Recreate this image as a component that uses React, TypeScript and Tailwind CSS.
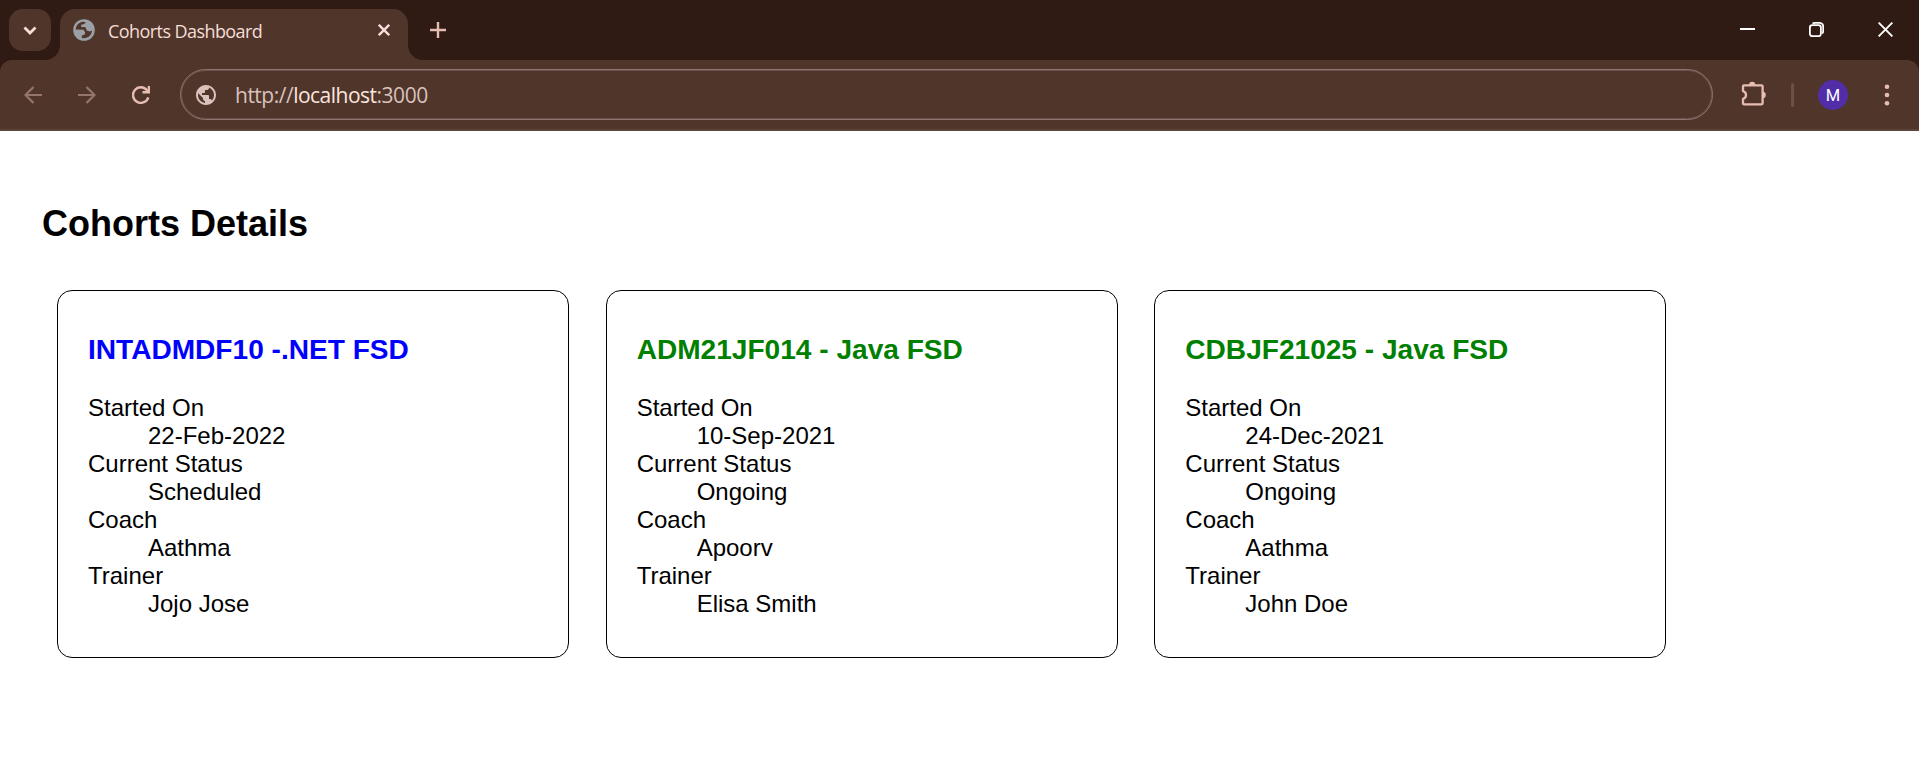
import React from "react";
import { MdPublic } from "react-icons/md";

type Cohort = {
  title: string;
  startedOn: string;
  status: string;
  coach: string;
  trainer: string;
};

const cohorts: Cohort[] = [
  { title: "INTADMDF10 -.NET FSD", startedOn: "22-Feb-2022", status: "Scheduled", coach: "Aathma", trainer: "Jojo Jose" },
  { title: "ADM21JF014 - Java FSD", startedOn: "10-Sep-2021", status: "Ongoing", coach: "Apoorv", trainer: "Elisa Smith" },
  { title: "CDBJF21025 - Java FSD", startedOn: "24-Dec-2021", status: "Ongoing", coach: "Aathma", trainer: "John Doe" },
];

function TabStrip() {
  return (
    <div className="flex h-[60px] items-start bg-[#301b14]">
      <button className="mt-[9px] ml-[9px] flex h-[42px] w-[42px] items-center justify-center rounded-[14px] bg-[#50352b]">
        <svg width="14" height="9" viewBox="0 0 14 9" fill="none" stroke="#f5ded7" strokeWidth="2.8">
          <path d="M1.5 1.5 7 7l5.500-5.500" />
        </svg>
      </button>
      <svg className="mt-[45px] -ml-[6px]" width="15" height="15" viewBox="0 0 15 15" fill="#50352b">
        <path d="M15 0v15H0C8.300 15 15 8.300 15 0z" />
      </svg>
      <div className="mt-[9px] flex h-[51px] w-[348px] items-start rounded-t-[15px] bg-[#50352b]">
        <svg className="mt-[10px] ml-[13px] shrink-0" width="22" height="22" viewBox="0 0 22 22">
          <circle cx="11" cy="11" r="10.800" fill="#9aa0a6" />
          <path
            d="M2.700 10.400C3 6.400 6 3.200 10.200 2.800L12.600 3.200 11.400 5 8.200 5.700 8.200 8 12.600 8.200 13.600 11.600 17 12.600 19.100 11.600C18.700 16 15.300 19.200 11 19.300L8.800 18.900 8.800 16.600 11.800 15.600 12.200 13.500 10.600 10.800z"
            fill="#50352b"
          />
        </svg>
        <span className="mt-[9px] ml-[13px] w-[250px] font-['Open_Sans',sans-serif] text-[18px] leading-[27px] tracking-[-0.57px] text-[#f5ded7]">
          Cohorts Dashboard
        </span>
        <svg className="mt-[15px] ml-[20px]" width="12" height="12" viewBox="0 0 12 12" fill="none" stroke="#f5ded7" strokeWidth="2.4">
          <path d="M.8.8l10.400 10.400M11.200.8.8 11.200" />
        </svg>
      </div>
      <svg className="mt-[45px]" width="15" height="15" viewBox="0 0 15 15" fill="#50352b">
        <path d="M0 0v15h15C6.700 15 0 8.300 0 0z" />
      </svg>
      <svg className="mt-[22px] ml-[7px]" width="16" height="16" viewBox="0 0 16 16" fill="none" stroke="#e7bdb1" strokeWidth="2.400">
        <path d="M8 0v16M0 8h16" />
      </svg>
      <div className="mt-[22px] mr-[26px] ml-auto flex items-center gap-[54px]">
        <svg width="15" height="15" viewBox="0 0 15 15" stroke="#fff" strokeWidth="2">
          <path d="M0 7h15" />
        </svg>
        <svg width="15" height="15" viewBox="0 0 15 15" fill="none" stroke="#fff" strokeWidth="1.800">
          <rect x=".9" y="3.200" width="11" height="11" rx="2.400" />
          <path d="M3.600 1.700C4.200 1 5 .9 6 .9h4.200c2.300 0 4 1.600 4 3.900V9c0 1-.4 2-1 2.500" />
        </svg>
        <svg width="15" height="15" viewBox="0 0 15 15" fill="none" stroke="#fff" strokeWidth="1.900">
          <path d="M.6.6l13.800 13.800M14.400.6.6 14.400" />
        </svg>
      </div>
    </div>
  );
}

function Toolbar() {
  return (
    <div className="bg-[#301b14]">
      <div className="flex h-[71px] items-center rounded-t-[12px] border-b-2 border-[#5c443b] bg-[#50352b]">
        <svg className="ml-[24px]" width="18" height="18" viewBox="0 0 18 18" fill="none" stroke="#96756b" strokeWidth="2.2">
          <path d="M18 9H1.500M9.500 1 1.500 9l8 8" />
        </svg>
        <svg className="ml-[36px]" width="18" height="18" viewBox="0 0 18 18" fill="none" stroke="#96756b" strokeWidth="2.2">
          <path d="M0 9h16.500M8.500 1l8 8-8 8" />
        </svg>
        <svg className="ml-[36px]" width="18" height="18" viewBox="0 0 18 18" fill="none" stroke="#e7bdb1" strokeWidth="2.400">
          <path d="M16.300 11.300A7.800 7.800 0 1 1 15 4.200L16.600 6" />
          <path d="M16.900 0v6.300h-6.400" />
        </svg>
        <div className="ml-[30px] flex h-[51px] w-[1533px] items-center rounded-full border border-[#8d766f] shadow-[inset_0_0_0_1px_#8d766f70]">
          <MdPublic className="ml-[13px] text-[#d8c2bb]" size={24} />
          <div className="ml-[17px] font-['Open_Sans',sans-serif] text-[21px] leading-[30px] tracking-[-0.5px] text-[#d8c2bb]">
            http://<span className="text-[#fbe6df]">localhost</span>:3000
          </div>
        </div>
        <svg className="-mt-[3px] ml-[28px]" width="25" height="25" viewBox="0 0 25 25" fill="none" stroke="#e7bdb1" strokeWidth="2.300">
          <path d="M3 4.300h17.600q1 0 1 1v17q0 1-1 1H3q-1 0-1-1v-4.500c2-.5 3-1.800 3-3.800s-1-3.400-3-3.900V5.300q0-1 1-1z" strokeLinejoin="round" />
          <path d="M8 4.200a3.200 3.400 0 0 1 6.400 0zM21.500 10.800a3.300 3.200 0 0 1 0 6.400z" fill="#e7bdb1" stroke="none" />
        </svg>
        <div className="ml-[25px] h-[24px] w-[3px] rounded-full bg-[#6f4e43]" />
        <div className="mt-px ml-[24px] flex h-[30px] w-[30px] items-center justify-center rounded-full bg-[#512da8] pt-[2px] font-[Roboto,sans-serif] text-[16.500px] leading-[20px] text-white">
          M
        </div>
        <svg className="ml-[36px]" width="6" height="22" viewBox="0 0 6 22" fill="#e7bdb1">
          <circle cx="3" cy="2.700" r="2.300" />
          <circle cx="3" cy="11" r="2.300" />
          <circle cx="3" cy="19.300" r="2.300" />
        </svg>
      </div>
    </div>
  );
}

function Detail({ label, value }: { label: string; value: string }) {
  return (
    <>
      <dt>{label}</dt>
      <dd className="ml-[60px]">{value}</dd>
    </>
  );
}

function CohortCard({ cohort }: { cohort: Cohort }) {
  const color = cohort.status === "Ongoing" ? "text-[#008000]" : "text-[#0000ff]";
  return (
    <section className="h-[368px] w-[512px] rounded-[15px] border border-black px-[30px] pt-[43px]">
      <h3 className={`text-[28.08px] leading-[32px] font-bold ${color}`}>{cohort.title}</h3>
      <dl className="mt-[28px] text-2xl leading-[28px]">
        <Detail label="Started On" value={cohort.startedOn} />
        <Detail label="Current Status" value={cohort.status} />
        <Detail label="Coach" value={cohort.coach} />
        <Detail label="Trainer" value={cohort.trainer} />
      </dl>
    </section>
  );
}

export default function App() {
  return (
    <div className="h-[781px] overflow-hidden bg-white">
      <TabStrip />
      <Toolbar />
      <main className="pt-[72px] pl-[42px] font-['Liberation_Sans',Arial,sans-serif] text-black">
        <h2 className="text-4xl leading-[41px] font-bold">Cohorts Details</h2>
        <div className="mt-[46px] ml-[15px] flex gap-[36.670px]">
          {cohorts.map((cohort) => (
            <CohortCard key={cohort.title} cohort={cohort} />
          ))}
        </div>
      </main>
    </div>
  );
}
